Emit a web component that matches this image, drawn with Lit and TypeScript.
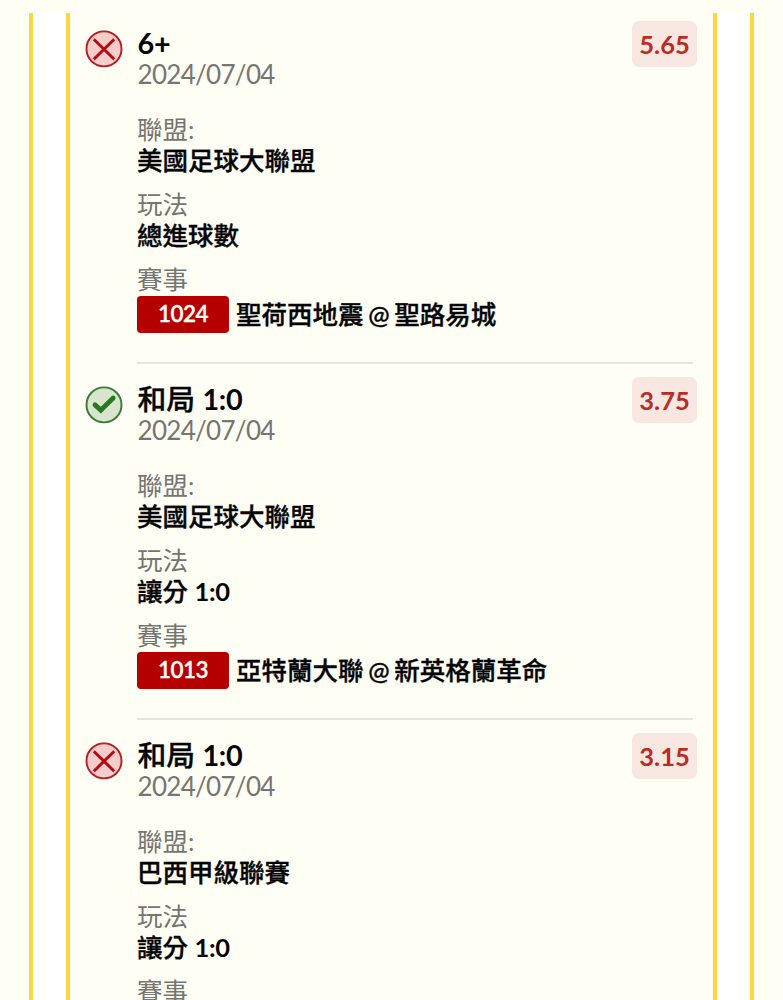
import { LitElement, html, css, svg } from "lit";
import { customElement, property } from "lit/decorators.js";

interface Bet {
  won: boolean;
  pick: string;
  odds: string;
  date: string;
  league: string;
  market: string;
  code: string;
  match: string;
}

const bets: Bet[] = [
  { won: false, pick: "6+", odds: "5.65", date: "2024/07/04", league: "美國足球大聯盟", market: "總進球數", code: "1024", match: "聖荷西地震 @ 聖路易城" },
  { won: true, pick: "和局 1:0", odds: "3.75", date: "2024/07/04", league: "美國足球大聯盟", market: "讓分 1:0", code: "1013", match: "亞特蘭大聯 @ 新英格蘭革命" },
  { won: false, pick: "和局 1:0", odds: "3.15", date: "2024/07/04", league: "巴西甲級聯賽", market: "讓分 1:0", code: "", match: "" },
];

@customElement("bet-item")
export class BetItem extends LitElement {
  @property({ attribute: false }) bet!: Bet;

  static styles = css`
    :host { display: block; height: 356px; }
    .item { display: grid; grid-template-columns: 38px 1fr; column-gap: 14px; padding: 0 16px 0 15px; }
    .icon { display: block; width: 38px; height: 38px; margin-top: 23px; }
    .body { height: 355px; padding-top: 21px; box-sizing: border-box; }
    .head { display: flex; justify-content: space-between; height: 62px; }
    .pick { font-size: 28.8px; line-height: 31px; font-weight: 700; padding-left: 0.5px; }
    .cjk { font-weight: 500; -webkit-text-stroke: 0.35px currentColor; }
    .grey { color: #757571; font-size: 25.5px; line-height: 31px; }
    .grey.date { font-size: 26px; letter-spacing: -0.7px; padding-left: 0.5px; }
    .odds { box-sizing: border-box; width: 65px; height: 46px; margin-top: -6.6px; border-radius: 7px; background: #f8e7e0; color: #b92b24; font-size: 25.5px; line-height: 46px; font-weight: 700; text-align: center; }
    .field { height: 62px; margin-bottom: 13px; }
    .head + .field { margin-top: 24px; }
    .value { font-size: 25.5px; line-height: 31px; font-weight: 500; white-space: nowrap; }
    .num { font-weight: 700; letter-spacing: -0.3px; }
    .match { display: flex; align-items: center; gap: 7px; height: 37px; margin-top: 1px; }
    .teams { word-spacing: -1.8px; }
    .code { width: 92px; height: 37px; border-radius: 4px; background: #b50000; color: #fffdf5; font-size: 22.5px; letter-spacing: -0.5px; line-height: 36px; font-weight: 600; -webkit-text-stroke: 0.3px currentColor; text-align: center; }
    .rule { height: 2px; margin-left: 52px; margin-right: 4px; background: #e6e4df; }
    .wrap { padding: 0 16px 0 15px; }
  `;

  private mixed(text: string) {
    return text
      .split(/([0-9:+]+)/)
      .map((part) => (/^[0-9:+]/.test(part) ? html`<span class="num">${part}</span>` : html`<span class="cjk">${part}</span>`));
  }

  private mark() {
    return this.bet.won
      ? svg`<circle cx="19" cy="18.9" r="17.5" fill="#d7e5cc" stroke="#387b38" stroke-width="1.9"/><path d="M10 18.9 L15.8 24.1 L28.2 12" fill="none" stroke="#267821" stroke-width="4.8" stroke-linecap="round" stroke-linejoin="miter"/>`
      : svg`<circle cx="19" cy="18.9" r="17.5" fill="#f5cdca" stroke="#b71c23" stroke-width="1.9"/><path d="M8.8 9.2 L29.2 29.2 M29.2 9.2 L8.8 29.2" fill="none" stroke="#b50b12" stroke-width="3"/>`;
  }

  render() {
    const b = this.bet;
    return html`
      <div class="item">
        <svg class="icon" viewBox="0 0 38 38">${this.mark()}</svg>
        <div class="body">
          <div class="head">
            <div>
              <div class="pick">${this.mixed(b.pick)}</div>
              <div class="grey date">${b.date}</div>
            </div>
            <div class="odds">${b.odds}</div>
          </div>
          <div class="field"><div class="grey">聯盟:</div><div class="value cjk">${b.league}</div></div>
          <div class="field"><div class="grey">玩法</div><div class="value">${this.mixed(b.market)}</div></div>
          <div class="grey">賽事</div>
          ${b.code
            ? html`<div class="match"><div class="code">${b.code}</div><div class="value cjk teams">${b.match}</div></div>`
            : ""}
        </div>
      </div>
      <div class="wrap"><div class="rule"></div></div>
    `;
  }
}

@customElement("app-root")
export class AppRoot extends LitElement {
  static styles = css`
    :host { display: block; box-sizing: border-box; height: 1000px; overflow: hidden; padding: 13px 29px 0 29px; background: #fffef5; color: #050505; font-family: Lato, "Noto Sans CJK TC", sans-serif; }
    .outer { box-sizing: border-box; width: 725px; height: 987px; padding: 0 33px; background: #fff; border: solid #fbd83f; border-width: 0 4px; }
    .inner { box-sizing: border-box; height: 987px; overflow: hidden; background: #fffef5; border: solid #fbd83f; border-width: 0 4px; }
    .list { margin-top: -6px; }
  `;

  render() {
    return html`
      <div class="outer"><div class="inner"><div class="list">
        ${bets.map((bet) => html`<bet-item .bet=${bet}></bet-item>`)}
      </div></div></div>
    `;
  }
}
